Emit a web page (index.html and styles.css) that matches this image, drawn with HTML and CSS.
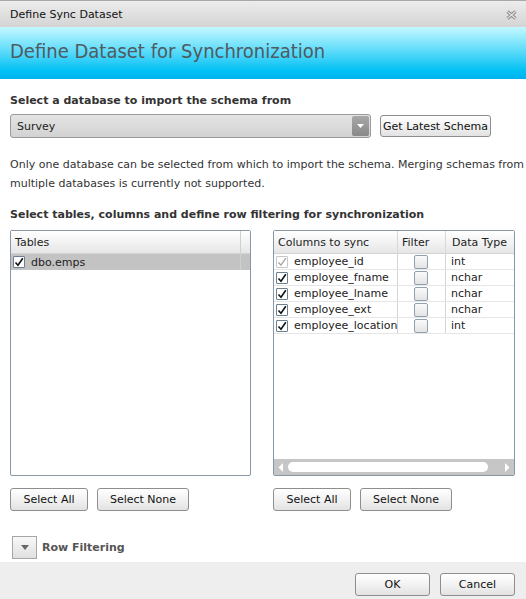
FILE: index.html
```html
<!DOCTYPE html>
<html>
<head>
<meta charset="utf-8">
<link rel="stylesheet" href="styles.css">
</head>
<body>
<div class="dialog">
  <div class="titlebar">
    <span class="title-text">Define Sync Dataset</span>
    <svg class="close" width="11" height="10" viewBox="0 0 11 10">
      <path d="M1.5 1.5 L9.5 8.5 M9.5 1.5 L1.5 8.5" stroke="#8c8c8c" stroke-width="3.2" fill="none"/>
      <path d="M1.5 1.5 L9.5 8.5 M9.5 1.5 L1.5 8.5" stroke="#e4e4e4" stroke-width="1.2" fill="none"/>
    </svg>
  </div>
  <div class="header">Define Dataset for Synchronization</div>

  <div class="content">
    <div class="section-label first">Select a database to import the schema from</div>
    <div class="select-row">
      <div class="dropdown">
        <span class="dd-text">Survey</span>
        <span class="dd-arrow"><svg width="7" height="4" viewBox="0 0 7 4"><path d="M0 0 L7 0 L3.5 4 Z" fill="#fff"/></svg></span>
      </div>
      <button class="btn schema-btn">Get Latest Schema</button>
    </div>
    <p class="note">Only one database can be selected from which to import the schema. Merging schemas from multiple databases is currently not supported.</p>

    <div class="section-label second">Select tables, columns and define row filtering for synchronization</div>

    <div class="grids">
      <div class="grid tables">
        <div class="t-head">
          <div class="t-cell t-name">Tables</div>
          <div class="t-cell t-extra"></div>
        </div>
        <div class="t-row selected">
          <div class="t-cell t-name"><span class="cb"><svg width="10" height="10" viewBox="0 0 10 10"><path d="M1.5 5.5 L4 8.2 L8.8 1.2" stroke="#111" stroke-width="1.6" fill="none"/></svg></span>dbo.emps</div>
          <div class="t-cell t-extra"></div>
        </div>
      </div>

      <div class="grid columns">
        <div class="c-body">
          <div class="c-head">
            <div class="c-cell c1">Columns to sync</div>
            <div class="c-cell c2">Filter</div>
            <div class="c-cell c3">Data Type</div>
          </div>
          <div class="c-row">
            <div class="c-cell c1"><span class="cb disabled"><svg width="10" height="10" viewBox="0 0 10 10"><path d="M1.5 5.5 L4 8.2 L8.8 1.2" stroke="#a8a8a8" stroke-width="1.4" fill="none"/></svg></span>employee_id</div>
            <div class="c-cell c2"><span class="fcb"></span></div>
            <div class="c-cell c3">int</div>
          </div>
          <div class="c-row">
            <div class="c-cell c1"><span class="cb"><svg width="10" height="10" viewBox="0 0 10 10"><path d="M1.5 5.5 L4 8.2 L8.8 1.2" stroke="#111" stroke-width="1.6" fill="none"/></svg></span>employee_fname</div>
            <div class="c-cell c2"><span class="fcb"></span></div>
            <div class="c-cell c3">nchar</div>
          </div>
          <div class="c-row">
            <div class="c-cell c1"><span class="cb"><svg width="10" height="10" viewBox="0 0 10 10"><path d="M1.5 5.5 L4 8.2 L8.8 1.2" stroke="#111" stroke-width="1.6" fill="none"/></svg></span>employee_lname</div>
            <div class="c-cell c2"><span class="fcb"></span></div>
            <div class="c-cell c3">nchar</div>
          </div>
          <div class="c-row">
            <div class="c-cell c1"><span class="cb"><svg width="10" height="10" viewBox="0 0 10 10"><path d="M1.5 5.5 L4 8.2 L8.8 1.2" stroke="#111" stroke-width="1.6" fill="none"/></svg></span>employee_ext</div>
            <div class="c-cell c2"><span class="fcb"></span></div>
            <div class="c-cell c3">nchar</div>
          </div>
          <div class="c-row">
            <div class="c-cell c1"><span class="cb"><svg width="10" height="10" viewBox="0 0 10 10"><path d="M1.5 5.5 L4 8.2 L8.8 1.2" stroke="#111" stroke-width="1.6" fill="none"/></svg></span>employee_location</div>
            <div class="c-cell c2"><span class="fcb"></span></div>
            <div class="c-cell c3">int</div>
          </div>
        </div>
        <div class="hscroll">
          <svg class="arr" width="6" height="9" viewBox="0 0 6 9"><path d="M5 0 L5 9 L0.5 4.5 Z" fill="#fff"/></svg>
          <span class="thumb"></span>
          <svg class="arr" width="6" height="9" viewBox="0 0 6 9"><path d="M1 0 L1 9 L5.5 4.5 Z" fill="#fff"/></svg>
        </div>
      </div>
    </div>

    <div class="btn-rows">
      <div class="btn-group">
        <button class="btn sel-all">Select All</button>
        <button class="btn sel-none">Select None</button>
      </div>
      <div class="btn-group">
        <button class="btn sel-all">Select All</button>
        <button class="btn sel-none">Select None</button>
      </div>
    </div>

    <div class="row-filter">
      <span class="toggle"><svg width="8" height="5" viewBox="0 0 8 5"><path d="M0 0 L8 0 L4 5 Z" fill="#666"/></svg></span>
      <span class="rf-label">Row Filtering</span>
    </div>
  </div>

  <div class="footer">
    <button class="btn foot-btn">OK</button>
    <button class="btn foot-btn">Cancel</button>
  </div>
</div>
</body>
</html>
```
FILE: styles.css
```css
* { box-sizing: border-box; }
html, body { margin: 0; padding: 0; }
body {
  font-family: "DejaVu Sans", Verdana, sans-serif;
  font-size: 11px;
  color: #222;
  background: #fff;
}
.dialog {
  width: 526px;
  height: 599px;
  display: flex;
  flex-direction: column;
  overflow: hidden;
}
.titlebar {
  height: 27px;
  border-top: 1px solid #a8a8a8;
  background: linear-gradient(#ececec, #d4d4d4);
  display: flex;
  align-items: center;
  justify-content: space-between;
  padding: 0 9px 0 10px;
  color: #111;
}
.close { margin-top: 1px; }
.header {
  height: 52px;
  background: linear-gradient(#c4f8ff 0%, #5fdcfa 45%, #00c0f4 85%, #00b2ef 100%);
  font-family: "DejaVu Sans Condensed", "DejaVu Sans", sans-serif;
  font-size: 20px;
  color: #505a60;
  padding: 12px 0 0 10px;
}
.content {
  padding: 0 10px;
  flex: 1;
}
.section-label {
  font-weight: bold;
  color: #333;
}
.section-label.first { margin-top: 15px; }
.select-row {
  display: flex;
  align-items: center;
  margin-top: 7px;
  height: 24px;
}
.dropdown {
  width: 361px;
  height: 24px;
  border: 1px solid #9a9a9a;
  border-radius: 3px;
  background: linear-gradient(#e4e4e4, #d2d2d2);
  display: flex;
  align-items: center;
  justify-content: space-between;
  padding-left: 6px;
  padding-right: 1px;
  color: #222;
}
.dd-arrow {
  width: 17px;
  height: 20px;
  background: linear-gradient(#a8a8a8, #888);
  border-radius: 2px;
  display: flex;
  align-items: center;
  justify-content: center;
}
.btn {
  font-family: "DejaVu Sans", Verdana, sans-serif;
  font-size: 11px;
  color: #111;
  border: 1px solid #8e8e8e;
  border-radius: 3px;
  background: linear-gradient(#ffffff, #f2f2f2 50%, #e2e2e2);
  padding: 0;
  height: 23px;
}
.schema-btn {
  margin-left: 9px;
  width: 111px;
  height: 22px;
}
.note {
  margin: 17px -10px 0 0;
  line-height: 19px;
  color: #333;
}
.section-label.second { margin-top: 15px; }
.grids {
  display: flex;
  justify-content: space-between;
  margin-top: 9px;
  height: 246px;
  width: 505px;
}
.grid {
  border: 1px solid #8797a5;
  border-radius: 2px;
  background: #fff;
}
.tables { width: 241px; }
.t-head, .t-row { display: flex; }
.t-head {
  height: 23px;
  background: linear-gradient(#ffffff, #e6e6e6);
  border-bottom: 1px solid #d4d4d4;
}
.t-cell { display: flex; align-items: center; }
.t-name { flex: 1; padding-left: 4px; }
.t-extra { width: 10px; border-left: 1px solid #cfcfcf; }
.t-row { height: 16px; }
.t-row.selected { background: #c3c3c3; }
.cb {
  width: 12px;
  height: 12px;
  border: 1px solid #6c7f92;
  background: #fff;
  display: inline-flex;
  align-items: center;
  justify-content: center;
  margin-right: 6px;
  border-radius: 1px;
}
.t-name .cb { margin-left: -2px; }
.cb.disabled { border-color: #c4c8cc; }
.columns {
  width: 242px;
  display: flex;
  flex-direction: column;
}
.c-body { flex: 1; }
.c-head, .c-row { display: flex; }
.c-head {
  height: 23px;
  background: linear-gradient(#ffffff, #e6e6e6);
  border-bottom: 1px solid #d4d4d4;
}
.c-cell { display: flex; align-items: center; }
.c1 { width: 124px; padding-left: 4px; border-right: 1px solid #d4d4d4; white-space: nowrap; }
.c2 { width: 48px; justify-content: center; border-right: 1px solid #d4d4d4; }
.c3 { flex: 1; padding-left: 5px; }
.c-head .c2 { justify-content: flex-start; padding-left: 4px; }
.c-head .c3 { padding-left: 6px; }
.c-head .c1, .c-head .c2 { border-right-color: #d8d8d8; }
.c-row { height: 16px; border-bottom: 1px solid #e6e6e6; }
.c-row .c1 { padding-left: 2px; }
.fcb {
  width: 14px;
  height: 14px;
  border: 1px solid #8fa0b0;
  border-radius: 2px;
  background: linear-gradient(#fafafa, #e4e4e4);
  margin-left: -2px;
}
.hscroll {
  height: 16px;
  background: #c6c6c6;
  display: flex;
  align-items: center;
  padding: 0 4px;
  gap: 4px;
}
.thumb {
  flex: 1;
  height: 10px;
  background: #fff;
  border-radius: 5px;
  margin-right: 12px;
}
.btn-rows {
  display: flex;
  width: 505px;
  justify-content: space-between;
  margin-top: 12px;
}
.btn-group { display: flex; gap: 9px; width: 242px; }
.sel-all { width: 78px; }
.sel-none { width: 92px; }
.row-filter {
  display: flex;
  align-items: center;
  margin-top: 25px;
  margin-left: 2px;
  height: 23px;
}
.toggle {
  width: 25px;
  height: 23px;
  border: 1px solid #a6a6a6;
  background: linear-gradient(#f8f8f8, #e0e0e0);
  display: flex;
  align-items: center;
  justify-content: center;
}
.rf-label {
  font-weight: bold;
  color: #555;
  margin-left: 5px;
}
.footer {
  height: 37px;
  background: #eeeeee;
  display: flex;
  justify-content: flex-end;
  align-items: center;
  gap: 10px;
  padding: 0 11px 0 0;
  padding-top: 7px;
}
.foot-btn { width: 75px; }
```
